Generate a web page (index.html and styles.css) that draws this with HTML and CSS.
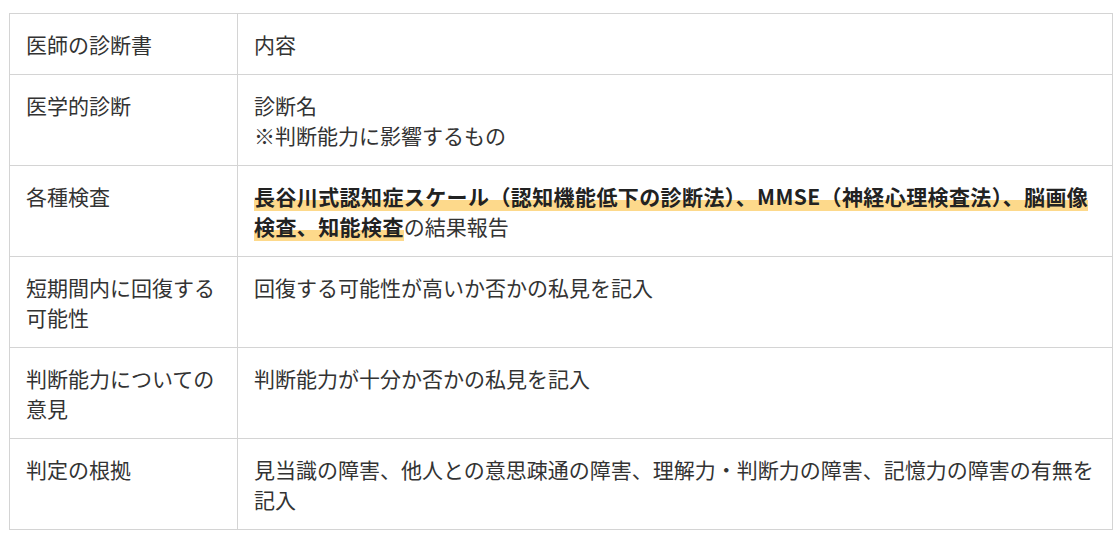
FILE: index.html
```html
<!DOCTYPE html>
<html lang="ja">
<head>
<meta charset="utf-8">
<link rel="stylesheet" href="styles.css">
</head>
<body>
<table class="doc-table">
  <colgroup><col class="col-a"><col class="col-b"></colgroup>
  <tr><td>医師の診断書</td><td>内容</td></tr>
  <tr><td>医学的診断</td><td>診断名<br>※判断能力に影響するもの</td></tr>
  <tr><td>各種検査</td><td><strong class="marker">長谷川式認知症スケール（認知機能低下の診断法）、MMSE（神経心理検査法）、脳画像検査、知能検査</strong>の結果報告</td></tr>
  <tr><td>短期間内に回復する可能性</td><td>回復する可能性が高いか否かの私見を記入</td></tr>
  <tr><td>判断能力についての意見</td><td>判断能力が十分か否かの私見を記入</td></tr>
  <tr><td>判定の根拠</td><td>見当識の障害、他人との意思疎通の障害、理解力・判断力の障害、記憶力の障害の有無を記入</td></tr>
</table>
</body>
</html>
```
FILE: styles.css
```css
html, body {
  margin: 0;
  padding: 0;
  background: #fff;
}
body {
  padding: 13px 5px 0 9px;
  font-family: "Noto Sans CJK JP", "Noto Sans", sans-serif;
  font-size: 21px;
  line-height: 30px;
  color: #333;
}
.doc-table {
  width: 1104px;
  border-collapse: collapse;
  table-layout: fixed;
}
.col-a { width: 228px; }
.doc-table td {
  border: 1px solid #d4d4d4;
  padding: 15px 16px 15px 16px;
  vertical-align: top;
}
.marker {
  font-weight: 700;
  color: #222;
  letter-spacing: 0.4px;
  background: linear-gradient(transparent 62%, #fdd98b 62%);
}
```
